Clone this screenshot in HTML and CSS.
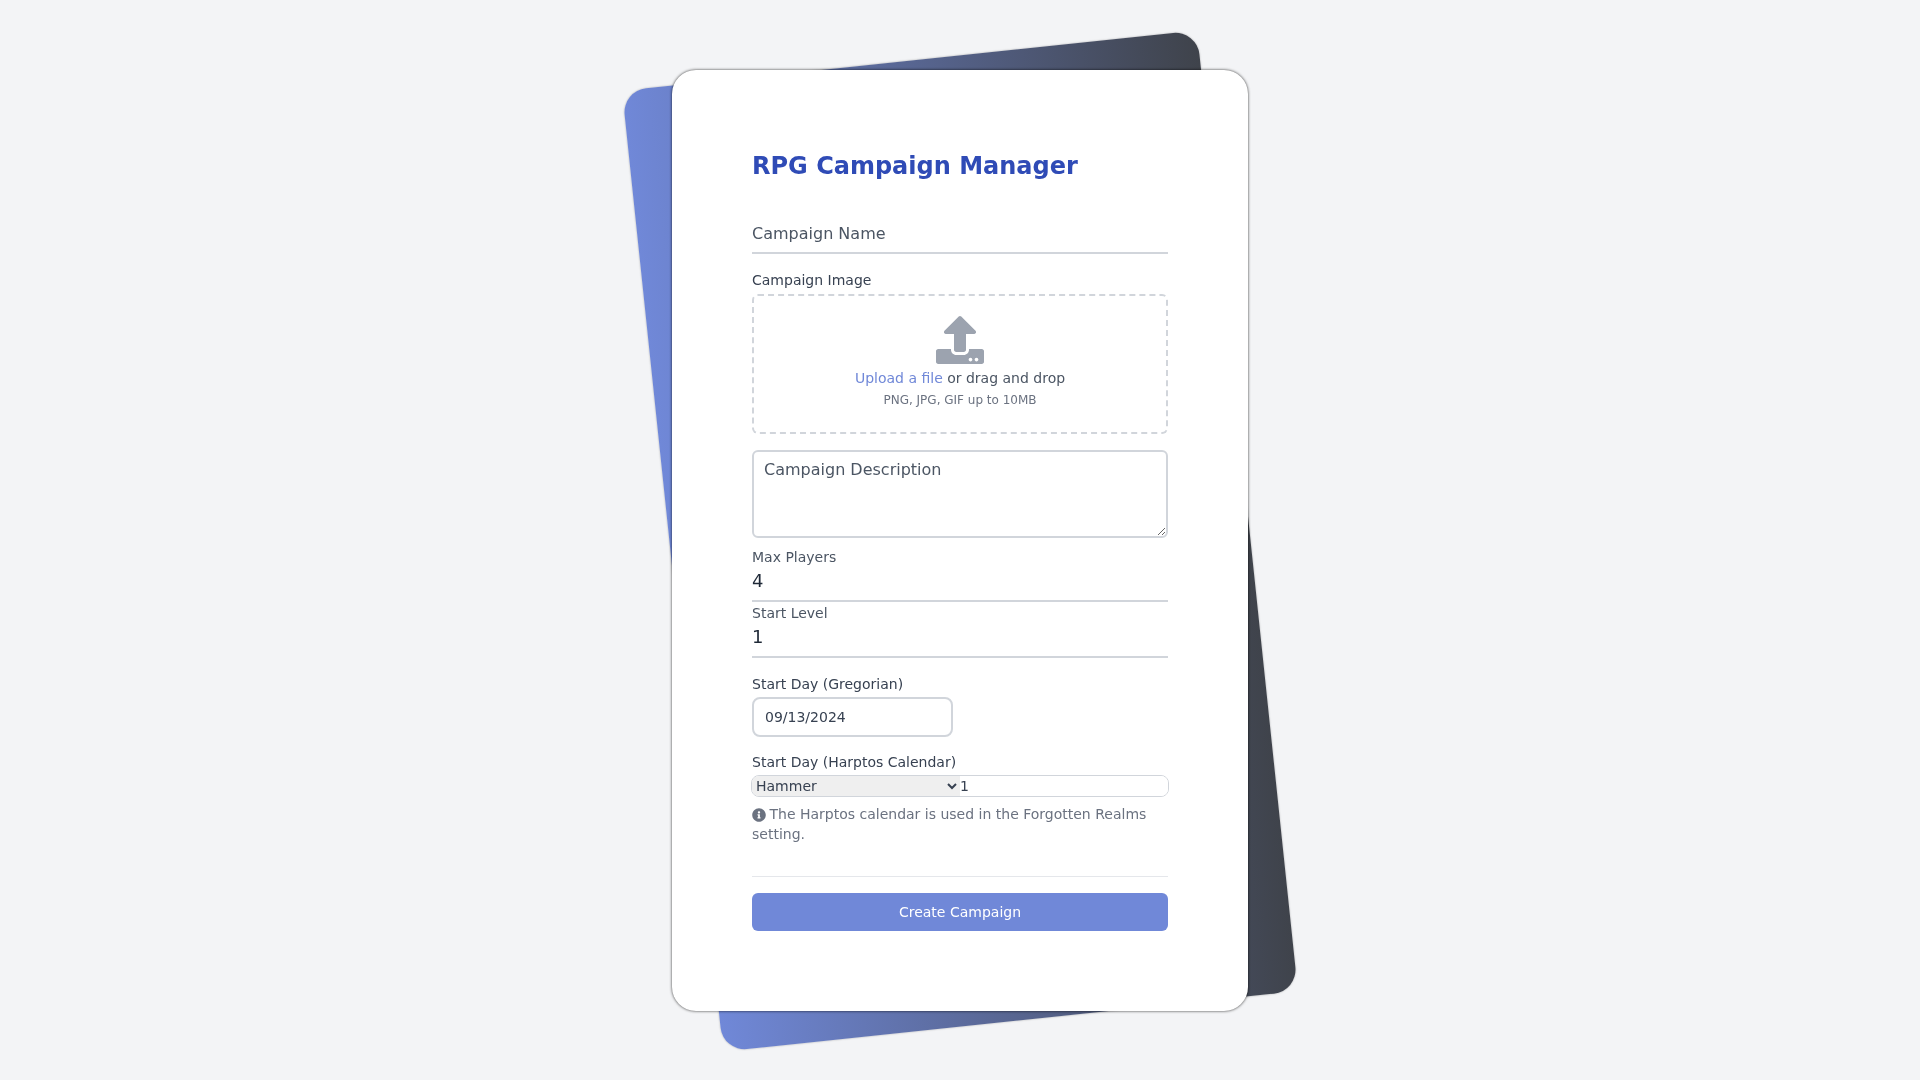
FILE: index.html
```html
<!DOCTYPE html>
<html lang="en">
<head>
  <meta charset="UTF-8">
  <title>RPG Campaign Manager</title>
  <meta name="viewport" content="width=device-width, initial-scale=1.0">
  <link rel="stylesheet" href="styles.css">
</head>
<body>

  <div class="stage">
    <div class="backdrop"></div>

    <form class="card">
      <h1>RPG Campaign Manager</h1>

      <input class="line-input name-input" type="text" placeholder="Campaign Name">

      <div class="image-field">
        <label class="label">Campaign Image</label>
        <div class="dropzone">
          <svg class="upload-icon" viewBox="0 0 512 512" aria-hidden="true">
            <path d="M296 384h-80c-13.3 0-24-10.7-24-24V192h-87.7c-17.8 0-26.7-21.5-14.1-34.1L242.3 5.7c7.5-7.5 19.8-7.5 27.3 0l152.2 152.2c12.6 12.6 3.7 34.1-14.1 34.1H320v168c0 13.3-10.7 24-24 24zm216-8v112c0 13.3-10.7 24-24 24H24c-13.3 0-24-10.7-24-24V376c0-13.3 10.7-24 24-24h136v8c0 30.9 25.1 56 56 56h80c30.9 0 56-25.1 56-56v-8h136c13.3 0 24 10.7 24 24zm-124 88c0-11-9-20-20-20s-20 9-20 20 9 20 20 20 20-9 20-20zm64 0c0-11-9-20-20-20s-20 9-20 20 9 20 20 20 20-9 20-20z"/>
          </svg>
          <p class="drop-text"><a href="#">Upload a file</a> or drag and drop</p>
          <p class="drop-hint">PNG, JPG, GIF up to 10MB</p>
        </div>
      </div>

      <textarea class="description" placeholder="Campaign Description"></textarea>

      <div class="number-field">
        <label class="small-label">Max Players</label>
        <input class="line-input number-input" type="text" value="4">
      </div>

      <div class="number-field">
        <label class="small-label">Start Level</label>
        <input class="line-input number-input" type="text" value="1">
      </div>

      <div class="date-field">
        <label class="label">Start Day (Gregorian)</label>
        <input class="date-input" type="text" value="09/13/2024">
      </div>

      <div class="harptos-field">
        <label class="label">Start Day (Harptos Calendar)</label>
        <div class="harptos-row">
          <select class="month-select">
            <option>Hammer</option>
          </select>
          <input class="day-input" type="text" value="1">
        </div>
        <p class="info">
          <svg class="info-icon" viewBox="0 0 512 512" aria-hidden="true">
            <path d="M256 8C119.043 8 8 119.083 8 256c0 136.997 111.043 248 248 248s248-111.003 248-248C504 119.083 392.957 8 256 8zm0 110c23.196 0 42 18.804 42 42s-18.804 42-42 42-42-18.804-42-42 18.804-42 42-42zm56 254c0 6.627-5.373 12-12 12h-88c-6.627 0-12-5.373-12-12v-24c0-6.627 5.373-12 12-12h12v-64h-12c-6.627 0-12-5.373-12-12v-24c0-6.627 5.373-12 12-12h64c6.627 0 12 5.373 12 12v100h12c6.627 0 12 5.373 12 12v24z"/>
          </svg>
          The Harptos calendar is used in the Forgotten Realms setting.
        </p>
      </div>

      <div class="submit-row">
        <button type="button" class="submit">Create Campaign</button>
      </div>
    </form>
  </div>

</body>
</html>
```

FILE: styles.css
```css
* {
  margin: 0;
  padding: 0;
  box-sizing: border-box;
  font-family: 'DejaVu Sans', Verdana, sans-serif;
}

body {
  background-color: #f3f4f6;
  min-height: 100vh;
  display: flex;
  justify-content: center;
  align-items: center;
  overflow: hidden;
}

.stage {
  position: relative;
  width: 576px;
}

.backdrop {
  position: absolute;
  top: -12px;
  right: -1px;
  bottom: -13px;
  left: -1px;
  background: linear-gradient(to right, #7088d8, #3f434b);
  border-radius: 24px;
  box-shadow: 0 0 2px rgba(0, 0, 0, 0.3);
  transform: rotate(-6deg);
}

.card {
  position: relative;
  background-color: #fff;
  border-radius: 24px;
  padding: 80px;
  box-shadow: 0 0 3px rgba(0, 0, 0, 0.8);
  will-change: transform;
}

h1 {
  font-size: 24px;
  line-height: 32px;
  font-weight: 700;
  color: #2f4bb6;
  margin-bottom: 24px;
}

.label {
  display: block;
  font-size: 14px;
  line-height: 20px;
  color: #374151;
}

.small-label {
  display: block;
  font-size: 14px;
  line-height: 20px;
  color: #4b5563;
}

.line-input {
  display: block;
  width: 100%;
  border: none;
  border-bottom: 2px solid #d1d5db;
  outline: none;
  background: transparent;
  font-size: 16px;
  color: #1f2937;
}

.line-input::placeholder,
.description::placeholder {
  color: #4b5563;
  opacity: 1;
}

.name-input {
  height: 48px;
  padding: 8px 0 0;
}

.image-field {
  margin-top: 16px;
}

.dropzone {
  margin-top: 4px;
  height: 140px;
  padding: 20px 24px 0;
  border: 2px dashed #d1d5db;
  border-radius: 6px;
  text-align: center;
}

.upload-icon {
  display: block;
  width: 48px;
  height: 48px;
  margin: 0 auto;
  fill: #9ca3af;
}

.drop-text {
  margin-top: 4px;
  font-size: 14px;
  line-height: 20px;
  color: #4b5563;
}

.drop-text a {
  color: #7088d8;
  text-decoration: none;
}

.drop-hint {
  margin-top: 4px;
  font-size: 12px;
  line-height: 16px;
  color: #6b7280;
}

.description {
  display: block;
  width: 100%;
  height: 88px;
  margin-top: 16px;
  padding: 6px 10px;
  border: 2px solid #d1d5db;
  border-radius: 6px;
  outline: none;
  font-size: 16px;
  line-height: 24px;
  color: #1f2937;
}

.number-input {
  height: 35px;
  padding-bottom: 7px;
  font-size: 18px;
}

.number-field {
  margin-top: 9px;
}

.number-field + .number-field {
  margin-top: 1px;
}

.date-field {
  margin-top: 16px;
}

.date-input {
  display: block;
  width: 201px;
  height: 40px;
  margin-top: 3px;
  padding: 0 11px;
  border: 2px solid #d1d5db;
  border-radius: 8px;
  outline: none;
  font-size: 14px;
  color: #374151;
}

.harptos-field {
  margin-top: 15px;
}

.harptos-row {
  display: flex;
  height: 22px;
  margin: 3px -1px 0;
  border: 1px solid #d1d5db;
  border-radius: 8px;
  overflow: hidden;
}

.month-select {
  flex: 0 0 50%;
  border: none;
  outline: none;
  font-size: 14px;
  color: #374151;
  background-color: #efefef;
}

.day-input {
  flex: 1;
  min-width: 0;
  border: none;
  outline: none;
  font-size: 14px;
  color: #374151;
}

.info {
  margin-top: 7px;
  font-size: 14px;
  line-height: 20px;
  color: #6b7280;
}

.info-icon {
  width: 14px;
  height: 14px;
  margin-right: -1px;
  fill: #6b7280;
  vertical-align: -3px;
}

.submit-row {
  margin-top: 32px;
  padding-top: 16px;
  border-top: 1px solid #e5e7eb;
}

.submit {
  display: block;
  width: 100%;
  height: 38px;
  border: none;
  border-radius: 6px;
  background-color: #7088d8;
  color: #fff;
  font-size: 14px;
  cursor: pointer;
}
```
